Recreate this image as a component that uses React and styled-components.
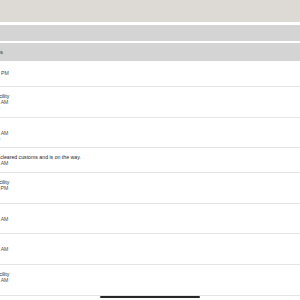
import styled, { createGlobalStyle } from "styled-components";

const GlobalStyle = createGlobalStyle`
  html, body {
    margin: 0;
    padding: 0;
    background: #ffffff;
    overflow: hidden;
  }
  body {
    font-family: "Liberation Sans", Arial, sans-serif;
  }
`;

const Screen = styled.div`
  position: relative;
  width: 300px;
  height: 300px;
  overflow: hidden;
  background: #ffffff;
  display: flex;
  flex-direction: column;
`;

const NavBar = styled.div`
  height: 22px;
  flex: none;
  background: #dddad6;
`;

const SearchBand = styled.div`
  height: 16px;
  flex: none;
  margin-top: 3px;
  background: #d4d4d4;
`;

const SectionHeader = styled.div`
  height: 18px;
  flex: none;
  margin-top: 2px;
  background: #d4d4d4;
  display: flex;
  align-items: center;
  font-size: 5.2px;
  font-weight: 700;
  color: #4a4a4a;
`;

const Shifted = styled.div`
  margin-left: -48.4px;
  white-space: nowrap;
`;

const List = styled.ul`
  list-style: none;
  margin: 0;
  padding: 0;
`;

const Row = styled.li`
  padding: 5.85px 0;
  border-bottom: 1px solid #e4e4e4;
  &:first-child {
    padding: 3px 0 4px;
  }
`;

const Line = styled.div`
  font-size: 5.2px;
  line-height: 6px;
  white-space: nowrap;
  color: ${(p) => (p.$muted ? "#4d4d4d" : "#262626")};
`;

const HomeIndicator = styled.div`
  position: absolute;
  left: 100px;
  bottom: 2px;
  width: 100px;
  height: 2px;
  border-radius: 1px;
  background: #262626;
`;

const events = [
  {
    title: "Out for Delivery",
    date: "Mar 14, 2023 at 7:05 PM",
    place: "MIAMI, FL 33152",
  },
  {
    title: "Arrived at Sorting Facility",
    date: "Mar 14, 2023 at 4:18 AM",
    place: "ATLANTA, GA 30304",
  },
  {
    title: "Departed Facility",
    date: "Mar 13, 2023 at 9:41 AM",
    place: "ATLANTA, GA 30349",
  },
  {
    title: "Your USPS item has cleared customs and is on the way.",
    date: "Mar 12, 2023 at 6:22 AM",
  },
  {
    title: "Arrived at Sorting Facility",
    date: "Mar 11, 2023 at 8:47 PM",
    place: "MACON, GA 31201",
  },
  { title: "In Transit", date: "Mar 10, 2023 at 5:30 AM", place: "MACON, GA" },
  { title: "Departed", date: "Mar 09, 2023 at 3:12 AM", place: "DORAL, FL" },
  {
    title: "Arrived at Sorting Facility",
    date: "Mar 08, 2023 at 1:56 AM",
    place: "MIAMI, FL 33152",
  },
];

const App = () => {
  return (
    <>
      <GlobalStyle />
      <Screen>
        <NavBar />
        <SearchBand />
        <SectionHeader>
          <Shifted>All Tracking Updates</Shifted>
        </SectionHeader>
        <Shifted>
          <List>
            {events.map((e, i) => (
              <Row key={i}>
                <Line>{e.title}</Line>
                <Line $muted>{e.date}</Line>
                {e.place && <Line $muted>{e.place}</Line>}
              </Row>
            ))}
          </List>
        </Shifted>
        <HomeIndicator />
      </Screen>
    </>
  );
};

export default App;
